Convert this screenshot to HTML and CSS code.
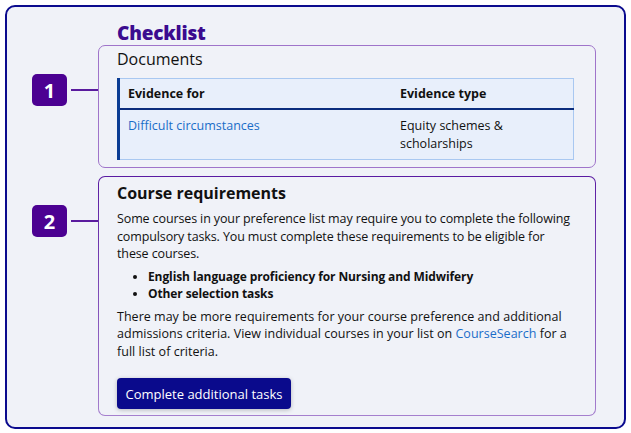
FILE: index.html
```html
<!DOCTYPE html>
<html lang="en">
<head>
<meta charset="utf-8">
<title>Checklist</title>
<link rel="stylesheet" href="styles.css">
</head>
<body>
<div class="frame">
  <div class="row row-head">
    <div class="side"></div>
    <h1 class="title">Checklist</h1>
  </div>
  <div class="row">
    <div class="side"><span class="badge">1</span><span class="line"></span></div>
    <section class="box box-docs">
      <h2 class="docs-title">Documents</h2>
      <table class="evidence">
        <thead>
          <tr><th class="c1">Evidence for</th><th class="c2">Evidence type</th></tr>
        </thead>
        <tbody>
          <tr><td class="c1"><a href="#" class="link">Difficult circumstances</a></td><td class="c2">Equity schemes &amp;<br>scholarships</td></tr>
        </tbody>
      </table>
    </section>
  </div>
  <div class="row row-second">
    <div class="side"><span class="badge">2</span><span class="line"></span></div>
    <section class="box box-course">
      <h2 class="course-title">Course requirements</h2>
      <p class="para">Some courses in your preference list may require you to complete the following compulsory tasks. You must complete these requirements to be eligible for these courses.</p>
      <ul class="tasks">
        <li>English language proficiency for Nursing and Midwifery</li>
        <li>Other selection tasks</li>
      </ul>
      <p class="para para-more">There may be more requirements for your course preference and additional admissions criteria. View individual courses in your list on <a href="#" class="link">CourseSearch</a> for a full list of criteria.</p>
      <button class="btn" type="button">Complete additional tasks</button>
    </section>
  </div>
</div>
</body>
</html>
```
FILE: styles.css
```css
html, body {
  margin: 0;
  padding: 0;
  background: #ffffff;
}
body {
  font-family: "Open Sans", "Liberation Sans", sans-serif;
  color: #111111;
}
.frame {
  margin: 5px;
  width: 617px;
  height: 420px;
  border: 2px solid #0b0b8e;
  border-radius: 10px;
  background: #f0f2f8;
  box-sizing: content-box;
}
.row {
  display: flex;
  align-items: flex-start;
}
.side {
  width: 91px;
  flex: none;
  display: flex;
  align-items: center;
  padding-top: 29px;
}
.row-head .side { padding-top: 0; }
.badge {
  margin-left: 25px;
  width: 35px;
  height: 32px;
  border-radius: 5px;
  background: #4c0192;
  color: #ffffff;
  font-weight: 700;
  font-size: 20px;
  display: flex;
  align-items: center;
  justify-content: center;
}
.line {
  margin-left: 4px;
  width: 27px;
  height: 1.5px;
  background: #5a1b9e;
}
.title {
  margin: 14px 0 0 19px;
  font-size: 19px;
  line-height: 24px;
  font-weight: 800;
  color: #3b0b8f;
  letter-spacing: -0.2px;
}
.box {
  width: 498px;
  box-sizing: border-box;
  border-radius: 7px;
}
.box-docs {
  border: 1.5px solid #9f74ca;
  height: 123px;
  padding: 2px 0 0 18px;
}
.docs-title {
  margin: 0;
  font-size: 16px;
  line-height: 22px;
  font-weight: 400;
  color: #111111;
}
.evidence {
  margin-top: 8px;
  width: 457px;
  border-collapse: collapse;
  border: 1px solid #a9c8f1;
  border-left: 3px solid #0b3c93;
  background: #e8effb;
  font-size: 12.5px;
}
.evidence th {
  text-align: left;
  font-weight: 700;
  height: 29px;
  padding: 0 8px;
  border-bottom: 2px solid #0b2d7d;
  vertical-align: middle;
}
.evidence td {
  vertical-align: top;
  padding: 7px 8px 6px;
  line-height: 18px;
  height: 35px;
}
.evidence .c1 { width: 256px; }
.link {
  color: #1a6dc8;
  text-decoration: none;
}
.row-second {
  margin-top: 8px;
}
.box-course {
  height: 240px;
  padding: 4px 17px 0 18px;
  border: 1.5px solid transparent;
  background:
    linear-gradient(#f0f2f8, #f0f2f8) padding-box,
    linear-gradient(180deg, #5a1ba2 0%, #a57fce 100%) border-box;
}
.course-title {
  margin: 0;
  font-size: 16px;
  line-height: 24px;
  font-weight: 700;
  color: #111111;
}
.para {
  margin: 5px 0 0;
  font-size: 12.5px;
  line-height: 17.5px;
  letter-spacing: -0.12px;
}
.para-more {
  letter-spacing: 0.02px;
}
.tasks {
  margin: 5px 0 6px;
  padding-left: 31px;
  font-size: 12px;
  line-height: 17px;
  font-weight: 700;
  letter-spacing: -0.1px;
}
.btn {
  margin-top: 18px;
  height: 31px;
  width: 174px;
  border: none;
  border-radius: 4px;
  background: #0a0a8c;
  color: #ffffff;
  font-family: "Open Sans", "Liberation Sans", sans-serif;
  font-size: 13px;
  font-weight: 500;
  box-shadow: 0 1px 4px rgba(0,0,0,0.25);
  padding: 0;
}
```
